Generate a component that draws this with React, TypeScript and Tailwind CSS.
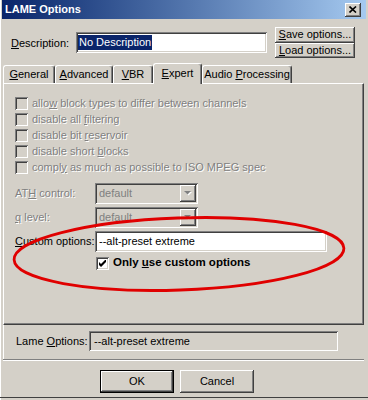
import React from "react";

const raised =
  "shadow-[inset_-1px_-1px_#404040,inset_1px_1px_#ffffff,inset_-2px_-2px_#808080,inset_2px_2px_#d4d0c8]";
const sunken =
  "shadow-[inset_1px_1px_#808080,inset_-1px_-1px_#ffffff,inset_2px_2px_#404040,inset_-2px_-2px_#d4d0c8]";
const grayed = "text-[#808080] [text-shadow:1px_1px_0_#ffffff]";

function Check({ checked, disabled }: { checked?: boolean; disabled?: boolean }) {
  return (
    <span
      className={`w-[13px] h-[13px] shrink-0 flex items-center justify-center ${sunken} ${
        disabled ? "bg-[#d4d0c8]" : "bg-white"
      }`}
    >
      {checked && (
        <svg width="7" height="7" viewBox="0 0 7 7">
          <polygon points="0,2 2,4 6,0 7,0 7,2 2,7 0,5" fill="#000" />
        </svg>
      )}
    </span>
  );
}

function Combo() {
  return (
    <div className={`w-[103px] h-[21px] p-[2px] flex items-center bg-[#d4d0c8] ${sunken}`}>
      <span className="flex-1 pl-[2px] text-[#808080]">default</span>
      <span className={`w-[16px] h-[17px] flex items-center justify-center ${raised}`}>
        <svg width="8" height="5" viewBox="0 0 8 5">
          <polygon points="1,1 8,1 4.5,4.5" fill="#ffffff" />
          <polygon points="0,0 7,0 3.5,3.5" fill="#808080" />
        </svg>
      </span>
    </div>
  );
}

const options = [
  <>allo<u>w</u> block types to differ between channels</>,
  <>disable all <u>f</u>iltering</>,
  <>disable bit <u>r</u>eservoir</>,
  <>disable short <u>b</u>locks</>,
  <>compl<u>y</u> as much as possible to ISO MPEG spec</>,
];

const tabs = [
  { label: <><u>G</u>eneral</>, w: "w-[52px]" },
  { label: <><u>A</u>dvanced</>, w: "w-[58px]" },
  { label: <><u>V</u>BR</>, w: "w-[40px]" },
  { label: <><u>E</u>xpert</>, w: "w-[49px]", active: true },
  { label: <>Audio <u>P</u>rocessing</>, w: "w-[90px]" },
];

export default function App() {
  return (
    <div className="relative w-[368px] h-[400px] overflow-hidden bg-[#d4d0c8] text-[11px] leading-none text-black font-['Liberation_Sans',Arial,sans-serif] flex flex-col shadow-[inset_1px_0_#ffffff]">
      {/* Title bar */}
      <div className="mx-[2px] h-[19px] flex items-center justify-between pl-[3px] pr-[5px] bg-linear-to-r from-[#0a246a] to-[#a6caf0]">
        <span className="text-white font-bold text-[11px]">LAME Options</span>
        <span className={`w-[16px] h-[14px] flex items-center justify-center bg-[#d4d0c8] ${raised}`}>
          <svg width="8" height="7" viewBox="0 0 8 7">
            <path d="M0.5 0.5 L7 6.5 M7 0.5 L0.5 6.5" stroke="#000" strokeWidth="1.6" />
          </svg>
        </span>
      </div>

      {/* Description row */}
      <div className="mt-[8px] h-[31px] flex pl-[11px]">
        <span className="mt-[11px] w-[65px]">
          <u>D</u>escription:
        </span>
        <div className={`mt-[5px] w-[191px] h-[21px] bg-white flex items-center pl-[2px] ${sunken}`}>
          <span className="bg-[#0a246a] text-white px-[1px] py-[2px]">No Description</span>
        </div>
        <div className="ml-[8px] flex flex-col">
          <button className={`w-[80px] h-[16px] flex items-center justify-center ${raised}`}>
            <span>
              <u>S</u>ave options...
            </span>
          </button>
          <button className={`w-[80px] h-[16px] flex items-center justify-center ${raised}`}>
            <span>
              <u>L</u>oad options...
            </span>
          </button>
        </div>
      </div>

      {/* Tabs */}
      <div className="mt-[5px] ml-[3px] h-[20px] flex items-end">
        {tabs.map((t, i) => (
          <div
            key={i}
            className={`${t.w} flex items-center justify-center border-t border-l border-white border-r border-r-[#404040] rounded-t-[3px] shadow-[inset_-1px_0_#808080] ${
              t.active ? "h-[21px] -mb-[1px] relative z-10 bg-[#d4d0c8] pb-[2px]" : "h-[18px]"
            }`}
          >
            <span>{t.label}</span>
          </div>
        ))}
      </div>

      {/* Panel */}
      <div className="ml-[3px] w-[361px] h-[242px] border border-white border-r-[#404040] border-b-[#404040] shadow-[inset_-1px_-1px_#808080] pl-[11px] pt-[11px] flex flex-col">
        {options.map((o, i) => (
          <div key={i} className="h-[16px] flex items-center gap-[4px]">
            <Check disabled />
            <span className={grayed}>{o}</span>
          </div>
        ))}

        <div className="mt-[8px] flex items-center">
          <span className={`w-[80px] ${grayed}`}>
            AT<u>H</u> control:
          </span>
          <Combo />
        </div>
        <div className="mt-[3px] flex items-center">
          <span className={`w-[80px] ${grayed}`}>
            <u>q</u> level:
          </span>
          <Combo />
        </div>
        <div className="mt-[3px] flex items-center">
          <span className="w-[80px]">
            <u>C</u>ustom options:
          </span>
          <div className={`w-[232px] h-[21px] bg-white flex items-center pl-[4px] ${sunken}`}>
            --alt-preset extreme
          </div>
        </div>
        <div className="mt-[3px] h-[16px] pl-[81px] flex items-center gap-[4px]">
          <Check checked />
          <span className="font-bold text-[11.5px]">
            Only <u>u</u>se custom options
          </span>
        </div>
      </div>

      {/* Lame options strip */}
      <div className="ml-[3px] w-[361px] h-[35px] border-b border-[#808080] shadow-[0_1px_#ffffff,inset_1px_0_#ffffff] pl-[13px] pt-[6px] flex">
        <span className="mt-[5px] w-[73px]">
          Lame <u>O</u>ptions:
        </span>
        <div className={`w-[249px] h-[20px] bg-[#d4d0c8] flex items-center pl-[5px] ${sunken}`}>
          --alt-preset extreme
        </div>
      </div>

      {/* Buttons */}
      <div className="mt-[10px] pl-[100px] flex gap-[6px]">
        <button className={`w-[74px] h-[23px] border border-black flex items-center justify-center ${raised}`}>
          OK
        </button>
        <button className={`w-[74px] h-[23px] flex items-center justify-center ${raised}`}>
          Cancel
        </button>
      </div>

      <div className="mt-auto mb-[2px] h-[1px] bg-[#404040]" />

      {/* Red hand-drawn highlight */}
      <svg className="absolute inset-0 pointer-events-none" width="368" height="400" viewBox="0 0 368 400">
        <ellipse
          cx="179"
          cy="254"
          rx="165"
          ry="36"
          transform="rotate(-2 179 254)"
          fill="none"
          stroke="#e00000"
          strokeWidth="2.8"
        />
      </svg>
    </div>
  );
}
